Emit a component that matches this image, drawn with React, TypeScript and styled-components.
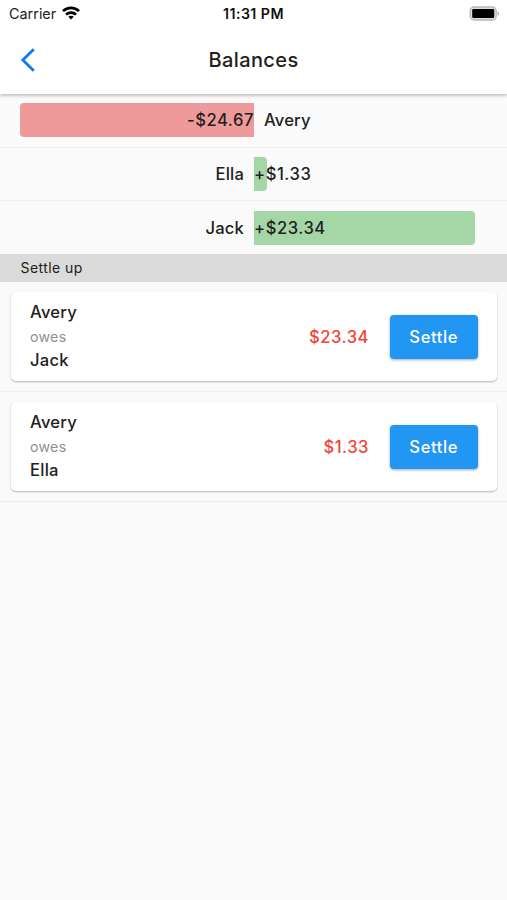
import React from "react";
import styled, { createGlobalStyle } from "styled-components";

const GlobalStyle = createGlobalStyle`
  * { box-sizing: border-box; }
  body {
    margin: 0;
    background: #fafafa;
    color: #212121;
    font-family: Inter, "Liberation Sans", sans-serif;
  }
`;

const Screen = styled.div`
  min-height: 900px;
  background: #fafafa;
`;

const Header = styled.header`
  position: relative;
  height: 94px;
  background: #fff;
  box-shadow: 0 1px 4px rgba(0, 0, 0, 0.32);
`;

const StatusBar = styled.div`
  display: grid;
  grid-template-columns: 1fr auto 1fr;
  align-items: center;
  height: 27px;
  padding: 0 7px 0 9px;
  line-height: 27px;
`;

const Carrier = styled.div`
  display: flex;
  align-items: center;
  gap: 6px;
  font-size: 14.4px;
  svg { margin-top: -2px; }
`;

const Clock = styled.div`
  margin-left: -2px;
  font-size: 14.2px;
  font-weight: 600;
  letter-spacing: 0.45px;
  color: #111;
`;

const BatterySlot = styled.div`
  display: flex;
  justify-content: flex-end;
`;

const NavBar = styled.div`
  display: grid;
  grid-template-columns: 60px 1fr 60px;
  align-items: center;
  height: 66px;
`;

const BackButton = styled.button`
  display: flex;
  padding: 0 0 0 20px;
  border: 0;
  background: none;
`;

const Title = styled.h1`
  margin: 0;
  text-align: center;
  font-size: 20px;
  font-weight: 500;
  letter-spacing: 0.4px;
`;

const BalanceRow = styled.div<{ $last?: boolean }>`
  display: grid;
  grid-template-columns: 234px 221px;
  align-items: center;
  height: ${(p) => (p.$last ? 53 : 53.5)}px;
  padding-left: 20px;
  border-bottom: ${(p) => (p.$last ? "0" : "1px solid #eeeeee")};
  font-size: 16.6px;
  font-weight: 500;
  letter-spacing: 0.55px;
  line-height: 34px;
  white-space: nowrap;
`;

const PersonName = styled.div<{ $side: "left" | "right" }>`
  padding: 0 10px;
  letter-spacing: 0.15px;
  text-align: ${(p) => (p.$side === "left" ? "right" : "left")};
`;

const Bar = styled.div<{ $negative: boolean }>`
  height: 34px;
  text-align: ${(p) => (p.$negative ? "right" : "left")};
  background: ${(p) => (p.$negative ? "#ef9a9a" : "#a5d6a7")};
  border-radius: ${(p) => (p.$negative ? "4px 0 0 4px" : "0 4px 4px 0")};
`;

const SectionHeader = styled.h2`
  height: 28px;
  margin: 0;
  padding-left: 20.5px;
  background: #dbdbdb;
  font-size: 14px;
  font-weight: 400;
  letter-spacing: 0.45px;
  line-height: 28px;
`;

const DebtItem = styled.div`
  height: 109.75px;
  padding: 10px 10px 0 11px;
  border-bottom: 1px solid #eeeeee;
`;

const Card = styled.div`
  display: flex;
  align-items: center;
  height: 89px;
  padding: 1px 19px 0;
  border-radius: 5px;
  background: #fff;
  box-shadow: 0 1px 2px rgba(0, 0, 0, 0.28);
`;

const Parties = styled.div`
  flex: 1;
  font-size: 16.6px;
  font-weight: 500;
  letter-spacing: 0.25px;
  line-height: 23.75px;
`;

const Owes = styled.div`
  color: #909090;
  font-size: 14.2px;
  font-weight: 400;
`;

const Amount = styled.div`
  color: #f44336;
  font-size: 16.6px;
  font-weight: 500;
  letter-spacing: 0.5px;
`;

const SettleButton = styled.button`
  width: 88.5px;
  height: 44px;
  margin-left: 20.5px;
  padding: 0;
  border: 0;
  border-radius: 4px;
  background: #2196f3;
  box-shadow: 0 1px 3px rgba(0, 0, 0, 0.35);
  color: #fff;
  font: 500 16.6px Inter, "Liberation Sans", sans-serif;
  letter-spacing: 0.6px;
`;

const WifiIcon = () => (
  <svg width="18" height="14" viewBox="0 0 18 14" fill="none" stroke="#000" strokeWidth="2.7">
    <path d="M1 5.1C5.5.7 12.5.7 17 5.1" />
    <path d="M4 8.6C6.8 5.9 11.2 5.9 14 8.6" />
    <path d="M6.3 10.8C7.8 9.4 10.2 9.4 11.7 10.8L9 13.6Z" fill="#000" stroke="none" />
  </svg>
);

const BatteryIcon = () => (
  <svg width="31" height="15" viewBox="0 0 31 15">
    <rect x="1.2" y="1" width="26" height="13" rx="3.8" fill="#ddd" stroke="#b8b8b8" strokeWidth="1.3" />
    <rect x="3.2" y="3" width="22" height="9" rx="1.3" fill="#000" />
    <path d="M28.6 5.2C30.5 5.9 30.5 9.1 28.6 9.8Z" fill="#aaa" />
  </svg>
);

const BackIcon = () => (
  <svg width="16" height="24" viewBox="0 0 16 24" fill="none" stroke="#0a7cf5" strokeWidth="2.8">
    <path d="M13.8 1.2L2.8 12L13.8 22.8" />
  </svg>
);

const balances = [
  { name: "Avery", amount: "-$24.67", width: 234, negative: true },
  { name: "Ella", amount: "+$1.33", width: 13, negative: false },
  { name: "Jack", amount: "+$23.34", width: 221, negative: false },
];

const debts = [
  { from: "Avery", to: "Jack", amount: "$23.34" },
  { from: "Avery", to: "Ella", amount: "$1.33" },
];

export default function App() {
  return (
    <Screen>
      <GlobalStyle />
      <Header>
        <StatusBar>
          <Carrier>Carrier <WifiIcon /></Carrier>
          <Clock>11:31 PM</Clock>
          <BatterySlot><BatteryIcon /></BatterySlot>
        </StatusBar>
        <NavBar>
          <BackButton aria-label="Back"><BackIcon /></BackButton>
          <Title>Balances</Title>
        </NavBar>
      </Header>
      <main>
        {balances.map((b, i) => {
          const bar = <Bar $negative={b.negative} style={{ width: b.width }}>{b.amount}</Bar>;
          return (
            <BalanceRow key={b.name} $last={i === balances.length - 1}>
              {b.negative ? bar : <PersonName $side="left">{b.name}</PersonName>}
              {b.negative ? <PersonName $side="right">{b.name}</PersonName> : bar}
            </BalanceRow>
          );
        })}
        <SectionHeader>Settle up</SectionHeader>
        {debts.map((d) => (
          <DebtItem key={d.to}>
            <Card>
              <Parties>
                <div>{d.from}</div>
                <Owes>owes</Owes>
                <div>{d.to}</div>
              </Parties>
              <Amount>{d.amount}</Amount>
              <SettleButton>Settle</SettleButton>
            </Card>
          </DebtItem>
        ))}
      </main>
    </Screen>
  );
}
